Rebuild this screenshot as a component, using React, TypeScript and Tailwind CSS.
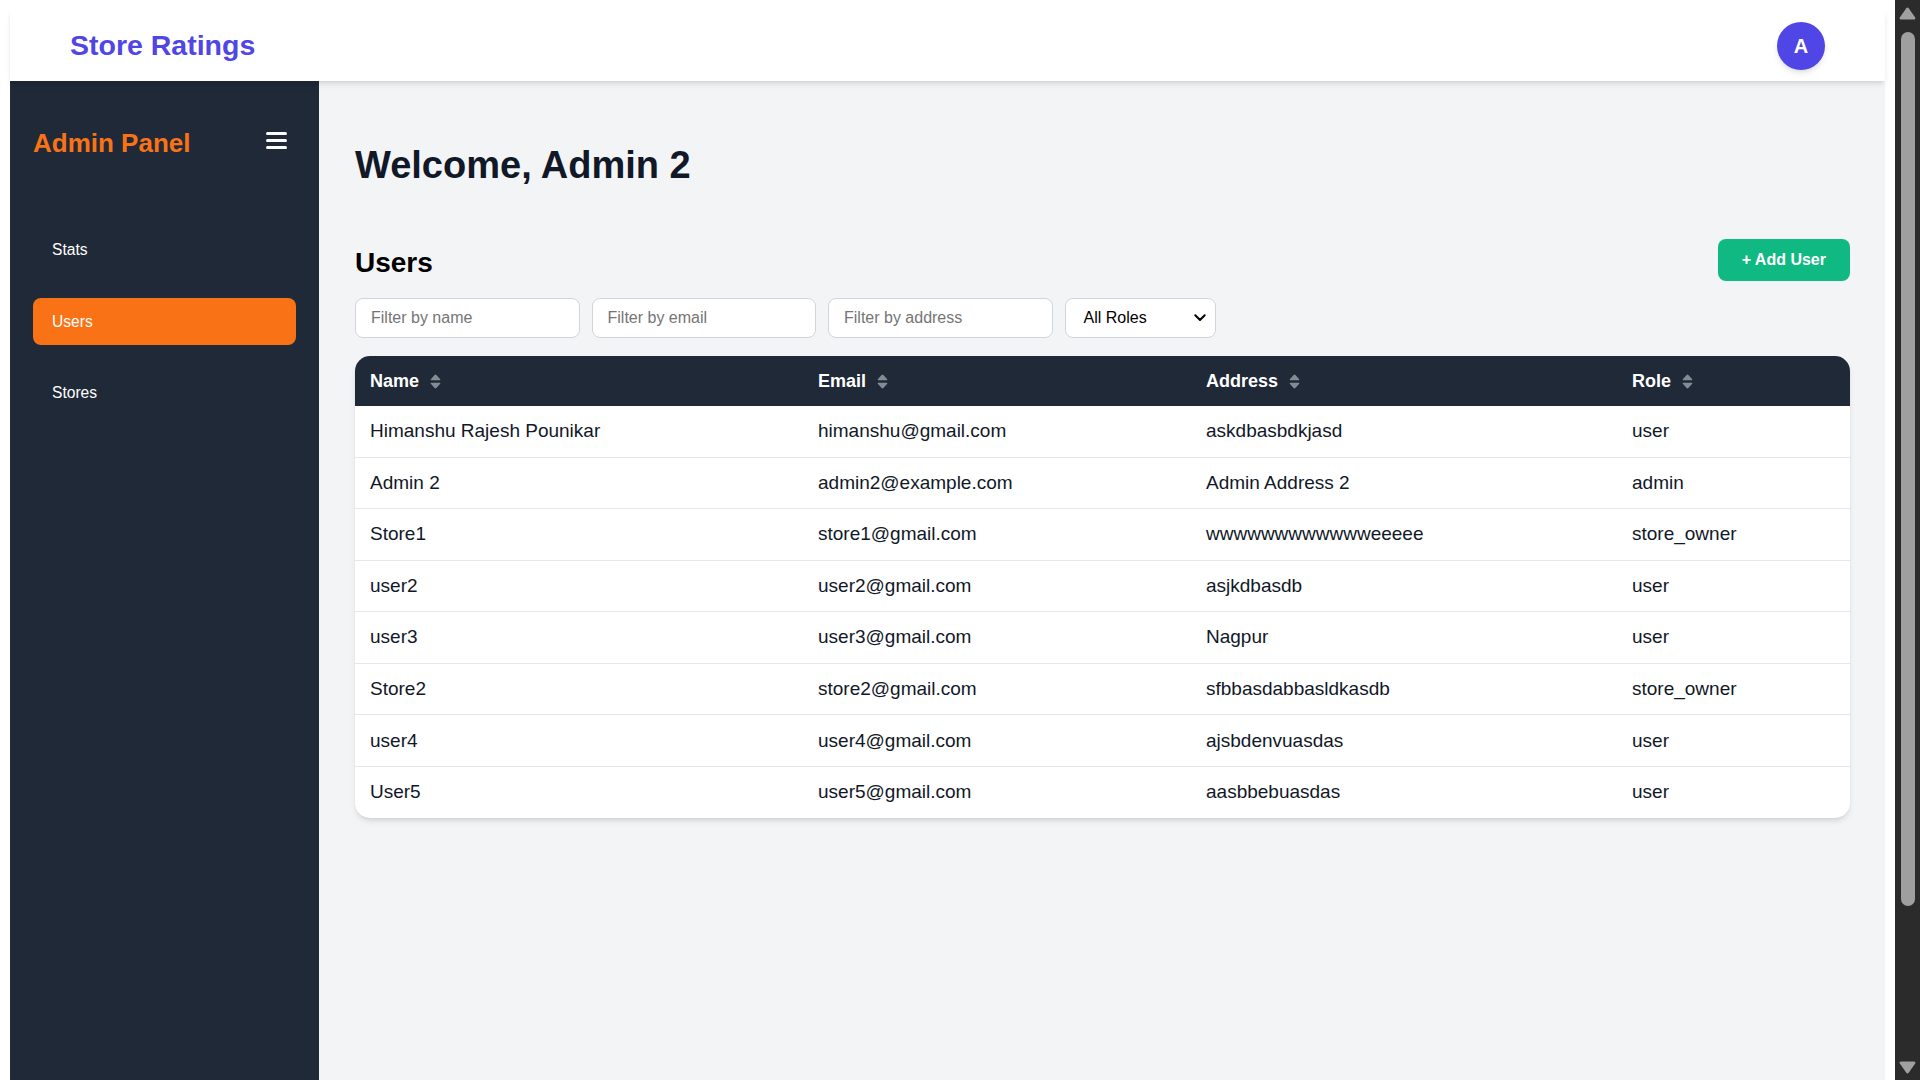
import React from "react";

const users = [
  { name: "Himanshu Rajesh Pounikar", email: "himanshu@gmail.com", address: "askdbasbdkjasd", role: "user" },
  { name: "Admin 2", email: "admin2@example.com", address: "Admin Address 2", role: "admin" },
  { name: "Store1", email: "store1@gmail.com", address: "wwwwwwwwwwwweeeee", role: "store_owner" },
  { name: "user2", email: "user2@gmail.com", address: "asjkdbasdb", role: "user" },
  { name: "user3", email: "user3@gmail.com", address: "Nagpur", role: "user" },
  { name: "Store2", email: "store2@gmail.com", address: "sfbbasdabbasldkasdb", role: "store_owner" },
  { name: "user4", email: "user4@gmail.com", address: "ajsbdenvuasdas", role: "user" },
  { name: "User5", email: "user5@gmail.com", address: "aasbbebuasdas", role: "user" },
];

function SortIcon() {
  return (
    <svg width="11" height="15" viewBox="0 0 11 15" className="ml-[11px] text-[#858b94]">
      <path d="M4.6 0.9 Q5.5 0 6.4 0.9 L10.2 5.2 Q10.8 6.2 9.6 6.3 H1.4 Q0.2 6.2 0.8 5.2 Z" fill="currentColor" />
      <path d="M4.6 14.1 Q5.5 15 6.4 14.1 L10.2 9.8 Q10.8 8.8 9.6 8.7 H1.4 Q0.2 8.8 0.8 9.8 Z" fill="currentColor" />
    </svg>
  );
}

function Hamburger() {
  return (
    <svg width="21" height="19" viewBox="0 0 21 19">
      <rect x="0" y="1" width="21" height="3" rx="1.5" fill="white" />
      <rect x="0" y="8" width="21" height="3" rx="1.5" fill="white" />
      <rect x="0" y="15" width="21" height="3" rx="1.5" fill="white" />
    </svg>
  );
}

function Scrollbar() {
  return (
    <div className="flex w-[25px] shrink-0 flex-col items-center bg-[#2b2b2b]">
      <svg width="17" height="13" viewBox="0 0 17 13" className="mt-[7px]">
        <path d="M7.3 1.2 Q8.5 0 9.7 1.2 L16.2 10.6 Q17 12.5 15 12.5 H2 Q0 12.5 0.8 10.6 Z" fill="#a0a0a0" />
      </svg>
      <div className="mt-[12px] h-[874px] w-[14px] rounded-full bg-[#9f9f9f]" />
      <div className="flex-1" />
      <svg width="17" height="13" viewBox="0 0 17 13" className="mb-[6px]">
        <path d="M7.3 11.8 Q8.5 13 9.7 11.8 L16.2 2.4 Q17 0.5 15 0.5 H2 Q0 0.5 0.8 2.4 Z" fill="#a0a0a0" />
      </svg>
    </div>
  );
}

export default function App() {
  const nav = ["Stats", "Users", "Stores"];
  const inputCls =
    "w-[224.5px] rounded-[8px] border border-[#d1d5db] bg-white px-[15px] text-[16px] placeholder:text-[#757575]";

  return (
    <div className="flex h-screen overflow-hidden bg-white font-['Liberation_Sans',Arial,sans-serif]">
      <div className="flex min-w-0 flex-1 flex-col px-[10px] pt-[10px]">
        <header className="relative z-10 flex h-[71px] shrink-0 items-center justify-between bg-white px-[60px] shadow-md">
          <span className="text-[28.5px] font-bold leading-none text-[#4f46e5]">Store Ratings</span>
          <div className="flex h-[48px] w-[48px] items-center justify-center rounded-full bg-[#4f46e5] text-[20px] font-bold text-white shadow-md">
            A
          </div>
        </header>

        <div className="flex flex-1">
          <aside className="w-[309px] shrink-0 bg-[#1f2937] px-[23px]">
            <div className="mt-[48.5px] flex h-[26px] items-center justify-between">
              <span className="text-[26px] font-bold leading-none text-[#f97316]">Admin Panel</span>
              <button className="mb-[5px] p-[8px] pr-[9px]">
                <Hamburger />
              </button>
            </div>
            <nav className="mt-[71px] flex flex-col gap-[24.5px]">
              {nav.map((n) => (
                <div
                  key={n}
                  className={
                    n === "Users"
                      ? "flex h-[47px] items-center rounded-[8px] bg-[#f97316] px-[19px] text-[15.6px] text-white"
                      : "flex h-[47px] items-center rounded-[8px] px-[19px] text-[15.6px] text-white"
                  }
                >
                  {n}
                </div>
              ))}
            </nav>
          </aside>

          <main className="min-w-0 flex-1 bg-[#f3f4f6] pl-[36px] pr-[35px]">
            <h1 className="pt-[65px] text-[38px] font-bold leading-none text-[#111827]">Welcome, Admin 2</h1>

            <div className="mt-[55px] flex h-[42px] items-center justify-between">
              <h2 className="mt-[6px] text-[28px] font-bold leading-none text-black">Users</h2>
              <button className="h-[42px] rounded-[8px] bg-[#10b981] px-[24px] text-[16px] font-bold text-white">
                + Add User
              </button>
            </div>

            <div className="mt-[17px] flex h-[40px] gap-[12px]">
              <input placeholder="Filter by name" className={inputCls} />
              <input placeholder="Filter by email" className={inputCls} />
              <input placeholder="Filter by address" className={inputCls} />
              <div className="flex w-[151px] items-center justify-between rounded-[8px] border border-[#d1d5db] bg-white pl-[18px] pr-[9px] text-[16px] text-black">
                <span>All Roles</span>
                <svg width="12" height="8" viewBox="0 0 12 8">
                  <path d="M1.3 1.3 L6 6 L10.7 1.3" stroke="black" strokeWidth="2" fill="none" strokeLinecap="round" strokeLinejoin="round" />
                </svg>
              </div>
            </div>

            <div className="mt-[18px] overflow-hidden rounded-[15px] bg-white shadow-md">
              <table className="w-full table-fixed border-collapse text-left">
                <colgroup>
                  <col className="w-[448px]" />
                  <col className="w-[388px]" />
                  <col className="w-[426px]" />
                  <col />
                </colgroup>
                <thead>
                  <tr className="h-[50px] bg-[#1f2937] text-white">
                    {["Name", "Email", "Address", "Role"].map((h) => (
                      <th key={h} className="px-[15px] text-[18px] font-bold">
                        <span className="flex items-center">
                          {h}
                          <SortIcon />
                        </span>
                      </th>
                    ))}
                  </tr>
                </thead>
                <tbody className="text-[19px] text-[#111827]">
                  {users.map((u, i) => (
                    <tr key={u.email} className={i === 0 ? "h-[51px]" : "h-[51.6px] border-t border-[#e5e7eb]"}>
                      <td className="px-[15px]">{u.name}</td>
                      <td className="px-[15px]">{u.email}</td>
                      <td className="px-[15px]">{u.address}</td>
                      <td className="px-[15px]">{u.role}</td>
                    </tr>
                  ))}
                </tbody>
              </table>
            </div>
          </main>
        </div>
      </div>
      <Scrollbar />
    </div>
  );
}
